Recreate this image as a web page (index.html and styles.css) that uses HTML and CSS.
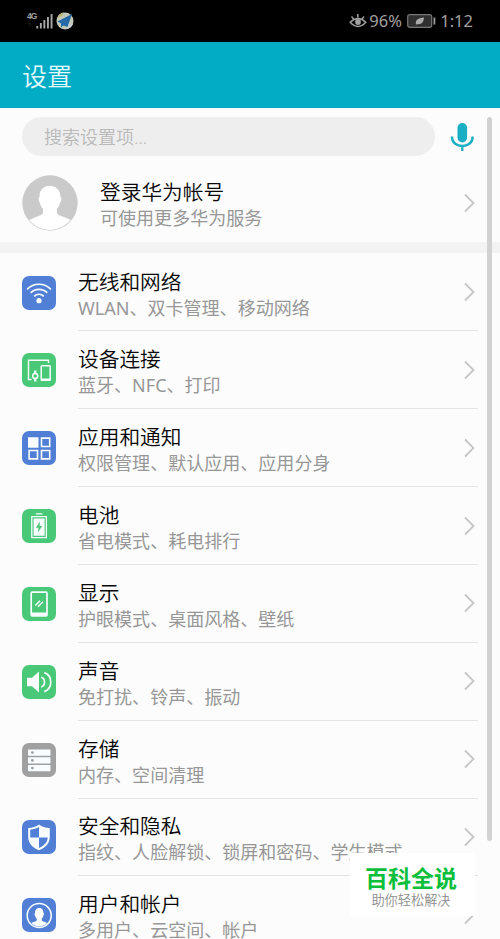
FILE: index.html
```html
<!DOCTYPE html>
<html lang="zh-CN">
<head>
<meta charset="utf-8">
<title>设置</title>
<link rel="stylesheet" href="styles.css">
</head>
<body>
<div class="phone">
  <header class="status">
    <div class="status-left">
      <div class="network"><span class="net-type">4G</span><span class="net-arrows">↑↓</span></div>
      <svg class="signal" width="17" height="16" viewBox="0 0 17 16" fill="#a8a8a8"><path d="M.3 13h1.9v2.5H.3zM3.9 10h1.9v5.500H3.900zM7.400 7h1.900v8.500H7.400zM11 4h1.900v11.500H11zM14.600 1h1.900v14.500h-1.900z"/></svg>
      <svg class="plane" width="18" height="18" viewBox="0 0 18 18"><circle cx="9" cy="9" r="8.500" fill="#c3c8b6"/><path d="M1 6a8.500 8.500 0 0 1 7-5.400L6 4z" fill="#b6b577"/><path d="M11 17a8.500 8.500 0 0 0 6-5l-5-1z" fill="#c4cdd0"/><path d="M16 2 1.500 9.500 5 11.500v4l2.500-2L11.500 15z" fill="#2469a8"/></svg>
    </div>
    <div class="status-right">
      <svg class="eye" width="18" height="17" viewBox="0 0 18 17" fill="none" stroke="#a0a0a0" stroke-width="1.500"><path d="M1.200 9.300Q9 1.800 16.800 9.300Q9 17.500 1.200 9.300zM2.500 3.600l2 2.300M8.800 1v3.500M15 3.600l-2 2.300"/><circle cx="9" cy="9" r="2.900" fill="#a0a0a0" stroke="none"/></svg>
      <span class="percent">96%</span>
      <svg class="battery" width="29" height="14" viewBox="0 0 29 14"><rect x=".7" y=".7" width="24" height="12.600" rx="2" fill="#303030" stroke="#777" stroke-width="1.200"/><path d="M26.500 3.500h1.800v7h-1.800z" fill="#999"/><path d="M9 10.500C8 6 11 4 17 3.500c-.3 5-3 7.500-7 6.500l-1 1z" fill="#aaa"/></svg>
      <span class="clock">1:12</span>
    </div>
  </header>
  <div class="titlebar"><h1>设置</h1></div>
  <main class="content">
    <div class="search">
      <div class="search-box">搜索设置项...</div>
      <svg class="mic" width="24" height="30" viewBox="0 0 24 30"><rect x="7.500" y="1" width="9.600" height="19.500" rx="4.800" fill="#1aafc4"/><path d="M2 14.500v.8c0 11.600 20.600 11.600 20.600 0v-.8M12.300 24v5" fill="none" stroke="#1aafc4" stroke-width="2.400"/></svg>
    </div>
    <section class="account">
      <svg class="avatar" width="56" height="56" viewBox="0 0 56 56"><circle cx="28" cy="28" r="27.700" fill="#cacaca"/><path d="M7.200 45.300C11 42.500 19 41 21 38.200v-4.500c-2-1.700-2.600-3.700-3-6-1.600-1-2-5.200-.4-6C16.700 7 38.300 7 38.500 21.700c1.500 1 1 5-.6 6-.4 2.300-1 4.300-3 6v4.500c2 2.800 10 4.300 13.900 7.100C36 58.500 19 58 7.200 45.300z" fill="#fff"/></svg>
      <div class="text"><div class="name">登录华为帐号</div><div class="desc">可使用更多华为服务</div></div>
      <svg class="chevron" width="11" height="20" viewBox="0 0 11 20"><path d="M1 1.500 9.500 10 1 18.500"/></svg>
    </section>
    <div class="gap"></div>
    <ul class="list">
      <li class="row">
        <svg class="icon blue" viewBox="0 0 34 34"><path class="line" stroke-width="1.700" d="M5.100 13.300a16.600 16.600 0 0 1 23.800 0M8.700 16.900a11.700 11.700 0 0 1 16.600 0M12.200 20.300a6.700 6.700 0 0 1 9.600 0"/><circle class="solid" cx="17" cy="24.700" r="2.600"/></svg>
        <div class="body"><div class="text"><div class="name">无线和网络</div><div class="desc">WLAN、双卡管理、移动网络</div></div><svg class="chevron" width="11" height="20" viewBox="0 0 11 20"><path d="M1 1.500 9.500 10 1 18.500"/></svg></div>
      </li>
      <li class="row">
        <svg class="icon green" viewBox="0 0 34 34"><path class="line" stroke-width="1.400" d="M9.500 26.500h-3V7.200h20V10"/><rect class="line" stroke-width="1.500" x="19.200" y="12.700" width="9" height="14.600" rx=".8"/><path class="solid" d="M19 25.500h9.500v2H19zM12 17.500h2.400v3H12zM12 25h2.400v3.500H12z"/><circle class="line" stroke-width="1.500" cx="13.200" cy="22.900" r="2.500"/></svg>
        <div class="body"><div class="text"><div class="name">设备连接</div><div class="desc">蓝牙、NFC、打印</div></div><svg class="chevron" width="11" height="20" viewBox="0 0 11 20"><path d="M1 1.500 9.500 10 1 18.500"/></svg></div>
      </li>
      <li class="row">
        <svg class="icon blue" viewBox="0 0 34 34"><path class="solid" d="M6 6.300h10.500v10.500H6z"/><path class="line" stroke-width="1.600" d="M19.500 7.100h8.200v8.400h-8.200zM7.100 19.500h8.400v8.400H7.100zM19.500 19.500h8.200v8.400h-8.200z"/></svg>
        <div class="body"><div class="text"><div class="name">应用和通知</div><div class="desc">权限管理、默认应用、应用分身</div></div><svg class="chevron" width="11" height="20" viewBox="0 0 11 20"><path d="M1 1.500 9.500 10 1 18.500"/></svg></div>
      </li>
      <li class="row">
        <svg class="icon green" viewBox="0 0 34 34"><path class="line" stroke-width="1.300" d="M13.800 4.800h6.600M9.800 7.600h14.600v21H9.800z"/><path class="solid" d="M11.600 9.400h11v17.400h-11z"/><path class="mark" d="m18 12.500-4.200 6.200h2.700l-.6 4.800 4.400-6.400h-2.700z"/></svg>
        <div class="body"><div class="text"><div class="name">电池</div><div class="desc">省电模式、耗电排行</div></div><svg class="chevron" width="11" height="20" viewBox="0 0 11 20"><path d="M1 1.500 9.500 10 1 18.500"/></svg></div>
      </li>
      <li class="row">
        <svg class="icon green" viewBox="0 0 34 34"><rect class="line" stroke-width="1.700" x="9.200" y="5.200" width="15.800" height="23.600" rx="1"/><path class="solid" d="M9 25.600h16v3.500H9z"/><path class="line" stroke-width="1.400" d="m13.300 18.500 4.700-4.700M16 19.800l5-5"/></svg>
        <div class="body"><div class="text"><div class="name">显示</div><div class="desc">护眼模式、桌面风格、壁纸</div></div><svg class="chevron" width="11" height="20" viewBox="0 0 11 20"><path d="M1 1.500 9.500 10 1 18.500"/></svg></div>
      </li>
      <li class="row">
        <svg class="icon green" viewBox="0 0 34 34"><path class="solid" d="M5 12.700h5l7-6.200v21l-7-6.200H5z"/><path class="line" stroke-width="1.700" d="M19.200 12.200c4.400 1.200 4.400 8.600 0 9.800M22.300 7.600c8.600 3 8.600 16 0 19"/></svg>
        <div class="body"><div class="text"><div class="name">声音</div><div class="desc">免打扰、铃声、振动</div></div><svg class="chevron" width="11" height="20" viewBox="0 0 11 20"><path d="M1 1.500 9.500 10 1 18.500"/></svg></div>
      </li>
      <li class="row">
        <svg class="icon gray" viewBox="0 0 34 34"><g class="solid"><rect x="6" y="6.500" width="22.500" height="6.300" rx=".8"/><rect x="6" y="14.300" width="22.500" height="6.300" rx=".8"/><rect x="6" y="22" width="22.500" height="6.300" rx=".8"/></g><g class="mark"><circle cx="10.400" cy="9.600" r="1.400"/><circle cx="10.400" cy="17.400" r="1.400"/><circle cx="10.400" cy="25.100" r="1.400"/></g></svg>
        <div class="body"><div class="text"><div class="name">存储</div><div class="desc">内存、空间清理</div></div><svg class="chevron" width="11" height="20" viewBox="0 0 11 20"><path d="M1 1.500 9.500 10 1 18.500"/></svg></div>
      </li>
      <li class="row">
        <svg class="icon blue" viewBox="0 0 34 34"><path class="solid" d="M17 4.500c3 2.200 6.500 3.300 10.800 3.500v9c0 6.300-4.200 10.500-10.800 13.300C10.400 27.500 6.200 23.300 6.200 17V8C10.500 7.800 14 6.700 17 4.500z"/><path class="mark" d="M17 7.100v10.400H8.200V9.700c3.500-.2 6.200-1 8.800-2.600zM17 17.500h8.700c-.2 4.700-3.300 8-8.700 10.400z"/></svg>
        <div class="body"><div class="text"><div class="name">安全和隐私</div><div class="desc">指纹、人脸解锁、锁屏和密码、学生模式</div></div><svg class="chevron" width="11" height="20" viewBox="0 0 11 20"><path d="M1 1.500 9.500 10 1 18.500"/></svg></div>
      </li>
      <li class="row">
        <svg class="icon blue" viewBox="0 0 34 34"><circle class="line" stroke-width="1.600" cx="17.200" cy="17.500" r="12"/><path class="solid" d="M9.300 25c2-1.200 4.600-1.300 5.400-2.500v-2c-1-.7-1.300-1.600-1.500-2.700-.8-.5-.8-2.300-.2-2.700-.3-6.900 8.800-6.900 8.500 0 .6.400.6 2.200-.2 2.700-.2 1.100-.5 2-1.500 2.700v2c.8 1.200 3.400 1.300 5.400 2.500-4 4.600-12 4.600-15.900 0z"/></svg>
        <div class="body"><div class="text"><div class="name">用户和帐户</div><div class="desc">多用户、云空间、帐户</div></div><svg class="chevron" width="11" height="20" viewBox="0 0 11 20"><path d="M1 1.500 9.500 10 1 18.500"/></svg></div>
      </li>
    </ul>
  </main>
  <div class="scrollbar"></div>
  <aside class="badge"><div class="badge-title">百科全说</div><div class="badge-sub">助你轻松解决</div></aside>
</div>
</body>
</html>
```
FILE: styles.css
```css
* { box-sizing: border-box; }
body { margin: 0; font-family: "Noto Sans", "Noto Sans CJK SC", sans-serif; background: #fcfcfc; }
.phone { position: relative; width: 500px; height: 939px; overflow: hidden; background: #fcfcfc; }
svg { display: block; flex: none; }

.status { display: flex; justify-content: space-between; height: 42px; padding: 0 27px; background: #000; color: #a0a0a0; }
.status-left, .status-right { display: flex; align-items: center; }
.network { display: flex; flex-direction: column; width: 9px; height: 16px; margin-top: -2px; font-family: "Liberation Sans", sans-serif; }
.net-type { font-size: 8.5px; line-height: 9px; font-weight: 700; letter-spacing: -1px; }
.net-arrows { font-size: 5px; line-height: 6px; color: #444; letter-spacing: -1px; padding-left: 1px; }
.signal { margin-top: -1px; }
.plane { margin-left: 3px; }
.status-right { font-size: 16.5px; line-height: 44px; }
.percent { margin-left: 2px; width: 38px; }
.clock { margin-left: 4px; }

.titlebar { display: flex; align-items: center; height: 66px; padding-left: 22px; background: #02acc5; }
.titlebar h1 { margin: 2px 0 0; font-size: 25px; line-height: 36px; font-weight: 350; color: #e3fbfd; }

.search { display: flex; align-items: center; padding: 9px 0 0 22px; }
.search-box { width: 413px; height: 39px; padding-left: 22px; border-radius: 20px; background: #eee; color: #b9b9b9; font-size: 18px; line-height: 41px; font-weight: 350; }
.mic { margin-left: 15px; }

.account { display: flex; align-items: center; height: 86px; padding: 8px 25px 0 22px; }
.account .text { flex: 1; margin-left: 22px; padding-top: 4px; }
.gap { height: 11px; background: #f3f3f3; }

.name { font-size: 20.7px; line-height: 26px; font-weight: 350; color: #080808; white-space: nowrap; }
.desc { font-size: 18.05px; line-height: 26px; font-weight: 400; color: #979797; white-space: nowrap; }
.chevron path { fill: none; stroke: #c6c6c6; stroke-width: 1.8; }

.list { margin: 0; padding: 0.6px 0 0; list-style: none; }
.row { display: flex; align-items: center; height: 77.85px; padding: 0 22px; }
.body { flex: 1; display: flex; align-items: center; height: 100%; margin-left: 22px; padding-right: 3px; border-bottom: 1px solid #e4e4e4; }
.body .text { flex: 1; padding-top: 5px; }
.icon { width: 34px; height: 34px; border-radius: 7px; }
.blue { background: #517fd5; color: #517fd5; }
.green { background: #49c878; color: #49c878; }
.gray { background: #a0a0a0; color: #a0a0a0; }
.line { fill: none; stroke: #f8fcff; }
.solid { fill: #f8fcff; }
.mark { fill: currentColor; }

.scrollbar { position: absolute; top: 117px; left: 487px; width: 5px; height: 724px; border-radius: 3px; background: #d2d2d2; }
.badge { position: absolute; left: 350px; top: 853px; width: 125px; height: 63px; padding: 10px 3px 0 0; background: #fff; text-align: center; }
.badge-title { font-size: 23px; line-height: 30px; font-weight: 600; color: #0dbf3c; }
.badge-sub { font-size: 13.2px; line-height: 14px; color: #8c8c8c; font-weight: 350; }
```
